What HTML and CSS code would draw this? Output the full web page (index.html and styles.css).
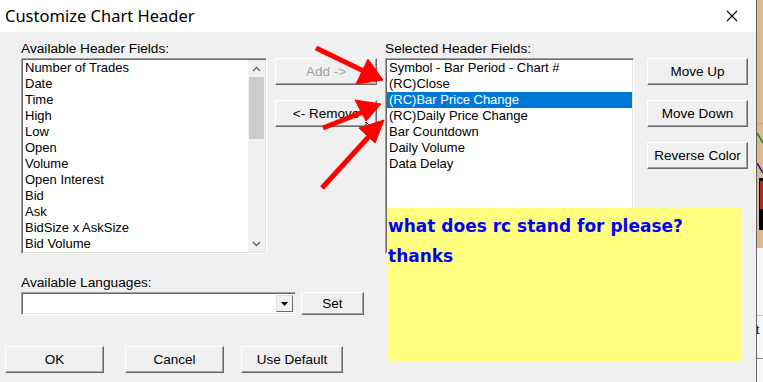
FILE: index.html
```html
<html>
<head>
	<link rel="stylesheet" href="styles.css">
</head>
<body>
<div class="desk">
	<div class="dialog">
		<div class="titlebar">
			<span class="title">Customize Chart Header</span>
			<svg class="close" width="12" height="12" viewBox="0 0 12 12">
				<path d="M1 1 L11 11 M11 1 L1 11" stroke="#000" stroke-width="1.1" fill="none"/>
			</svg>
		</div>

		<div class="panel">
			<div class="fields">
				<div class="col-avail">
					<div class="label">Available Header Fields:</div>
					<div class="listbox">
						<ul class="items">
							<li>Number of Trades</li>
							<li>Date</li>
							<li>Time</li>
							<li>High</li>
							<li>Low</li>
							<li>Open</li>
							<li>Volume</li>
							<li>Open Interest</li>
							<li>Bid</li>
							<li>Ask</li>
							<li>BidSize x AskSize</li>
							<li>Bid Volume</li>
						</ul>
						<div class="scrollbar">
							<div class="sb-btn">
								<svg width="9" height="6" viewBox="0 0 9 6"><path d="M1 5 L4.5 1.5 L8 5" stroke="#606060" stroke-width="1.3" fill="none"/></svg>
							</div>
							<div class="sb-track"><div class="sb-thumb"></div></div>
							<div class="sb-btn">
								<svg width="9" height="6" viewBox="0 0 9 6"><path d="M1 1 L4.5 4.5 L8 1" stroke="#606060" stroke-width="1.3" fill="none"/></svg>
							</div>
						</div>
					</div>
				</div>

				<div class="col-move">
					<div class="btn disabled">Add -&gt;</div>
					<div class="btn">&lt;- Remove</div>
				</div>

				<div class="col-sel">
					<div class="label">Selected Header Fields:</div>
					<div class="listbox">
						<ul class="items">
							<li>Symbol - Bar Period - Chart #</li>
							<li>(RC)Close</li>
							<li class="selected">(RC)Bar Price Change</li>
							<li>(RC)Daily Price Change</li>
							<li>Bar Countdown</li>
							<li>Daily Volume</li>
							<li>Data Delay</li>
						</ul>
					</div>
				</div>

				<div class="col-order">
					<div class="btn">Move Up</div>
					<div class="btn">Move Down</div>
					<div class="btn">Reverse Color</div>
				</div>
			</div>

			<div class="lang">
				<div class="label">Available Languages:</div>
				<div class="lang-row">
					<div class="combo">
						<div class="combo-btn">
							<svg width="7" height="4" viewBox="0 0 7 4"><path d="M0 0 L7 0 L3.5 4 Z" fill="#000"/></svg>
						</div>
					</div>
					<div class="btn set">Set</div>
				</div>
			</div>

			<div class="actions">
				<div class="btn ok">OK</div>
				<div class="btn cancel">Cancel</div>
				<div class="btn default">Use Default</div>
			</div>

			<div class="note">
				what does rc stand for please?<br>
				thanks
			</div>
		</div>
	</div>

	<div class="strip">
		<svg width="6" height="382" viewBox="0 0 6 382">
			<rect x="0" y="0" width="6" height="248" fill="#dfb98c"/>
			<line x1="0" y1="123.5" x2="6" y2="123.5" stroke="#b8a890" stroke-width="1"/>
			<line x1="0" y1="133" x2="6" y2="143" stroke="#1d8a1d" stroke-width="1.5"/>
			<line x1="0" y1="163" x2="6" y2="173" stroke="#1a1aa0" stroke-width="1.5"/>
			<rect x="2" y="178" width="4" height="52" fill="#000"/>
			<rect x="3" y="181" width="3" height="28" fill="#b02a2a"/>
			<rect x="0" y="248" width="6" height="134" fill="#f7f7f7"/>
			<line x1="0" y1="315.5" x2="6" y2="315.5" stroke="#c8c8c8"/>
			<text x="-1" y="334" font-family="Liberation Sans, Arial, sans-serif" font-size="12" fill="#000">t</text>
			<line x1="0" y1="358.5" x2="6" y2="358.5" stroke="#8a8a8a"/>
		</svg>
	</div>

	<svg class="marks" width="763" height="382" viewBox="0 0 763 382">
		<path d="M366 122 L366 135 L369 132 L371 137 L373 136 L371 131 L375 131 Z" fill="#fff" stroke="#000" stroke-width="1"/>
		<g fill="#ff0000" stroke="#ff0000">
			<line x1="316" y1="48" x2="372" y2="75" stroke-width="5"/>
			<polygon points="383,80 368,59 356,84" stroke-width="1"/>
			<line x1="323" y1="128" x2="368" y2="110" stroke-width="5"/>
			<polygon points="381,104 355,100 366,121" stroke-width="1"/>
			<line x1="322" y1="188" x2="373" y2="132" stroke-width="5"/>
			<polygon points="384,120 359,128 375,143" stroke-width="1"/>
		</g>
	</svg>
</div>
</body>
</html>
```

FILE: styles.css
```css
body {
	margin: 0;
	font-family: "Liberation Sans", Arial, sans-serif;
	font-size: 13px;
	color: #000;
	background: #f0f0f0;
}

.desk {
	position: relative;
	display: flex;
	width: 763px;
	height: 382px;
	overflow: hidden;
}

.dialog {
	width: 757px;
	display: flex;
	flex-direction: column;
}

.titlebar {
	height: 32px;
	background: #fff;
	display: flex;
	align-items: center;
	justify-content: space-between;
	box-sizing: border-box;
	padding: 0 18px 2px 5px;
}
.title {
	font-family: "Noto Sans", sans-serif;
	font-size: 16.5px;
}
.close {
	margin-top: 2px;
}

.panel {
	position: relative;
	flex: 1;
	background: #f0f0f0;
	padding-top: 8px;
}

.label {
	font-size: 13.7px;
	line-height: 18px;
	height: 18px;
	white-space: nowrap;
}

.fields {
	display: flex;
	align-items: flex-start;
	padding-left: 21px;
}

.col-avail {
	width: 246px;
}
.col-move {
	width: 102px;
	margin-left: 8px;
	padding-top: 18px;
	display: flex;
	flex-direction: column;
	gap: 15px;
}
.col-sel {
	width: 249px;
	margin-left: 8px;
}
.col-order {
	width: 101px;
	margin-left: 13px;
	padding-top: 18px;
	display: flex;
	flex-direction: column;
	gap: 15px;
}

.listbox {
	height: 196px;
	box-sizing: border-box;
	background: #fff;
	border: 1px solid;
	border-color: #a0a0a0 #fff #fff #a0a0a0;
	box-shadow: inset 1px 1px 0 #696969, inset -1px -1px 0 #e3e3e3;
	padding: 1px;
	display: flex;
}

.items {
	list-style: none;
	margin: 0;
	padding: 0;
	flex: 1;
}
.items li {
	height: 16px;
	line-height: 16px;
	padding-left: 2px;
	white-space: nowrap;
}
.items li.selected {
	background: #0078d7;
	color: #fff;
}

.scrollbar {
	width: 17px;
	background: #f0f0f0;
	display: flex;
	flex-direction: column;
}
.sb-btn {
	height: 17px;
	display: flex;
	align-items: center;
	justify-content: center;
}
.sb-track {
	flex: 1;
	padding: 0 1px;
}
.sb-thumb {
	height: 62px;
	background: #cdcdcd;
}

.btn {
	height: 27px;
	box-sizing: border-box;
	background: #f0f0f0;
	border-top: 1px solid #fff;
	border-left: 1px solid #fff;
	border-right: 1px solid #696969;
	border-bottom: 1px solid #696969;
	box-shadow: inset -1px -1px 0 #a0a0a0;
	display: flex;
	align-items: center;
	justify-content: center;
	font-size: 13.5px;
	white-space: nowrap;
}
.btn.disabled {
	color: #a0a0a0;
}

.lang {
	margin-top: 20px;
	padding-left: 21px;
}
.lang-row {
	display: flex;
}
.combo {
	width: 275px;
	height: 23px;
	box-sizing: border-box;
	background: #fff;
	border: 1px solid;
	border-color: #a0a0a0 #fff #fff #a0a0a0;
	box-shadow: inset 1px 1px 0 #696969, inset -1px -1px 0 #e3e3e3;
	padding: 2px;
	display: flex;
	justify-content: flex-end;
}
.combo-btn {
	width: 17px;
	box-sizing: border-box;
	background: #f0f0f0;
	border-top: 1px solid #e3e3e3;
	border-left: 1px solid #e3e3e3;
	border-right: 1px solid #696969;
	border-bottom: 1px solid #696969;
	display: flex;
	align-items: center;
	justify-content: center;
}
.btn.set {
	width: 63px;
	height: 23px;
	margin-left: 5px;
}

.actions {
	display: flex;
	margin-top: 31px;
	padding-left: 5px;
}
.btn.ok {
	width: 99px;
}
.btn.cancel {
	width: 99px;
	margin-left: 21px;
}
.btn.default {
	width: 102px;
	margin-left: 17px;
}

.note {
	position: absolute;
	left: 387px;
	top: 176px;
	width: 355px;
	height: 154px;
	box-sizing: border-box;
	background: #ffff80;
	color: #0000ff;
	font-family: "DejaVu Sans", Verdana, sans-serif;
	font-weight: bold;
	font-size: 17px;
	line-height: 30px;
	padding: 3px 0 0 1px;
}

.strip {
	width: 6px;
	border-left: 1px solid #646464;
}

.marks {
	position: absolute;
	left: 0;
	top: 0;
	pointer-events: none;
}
```
